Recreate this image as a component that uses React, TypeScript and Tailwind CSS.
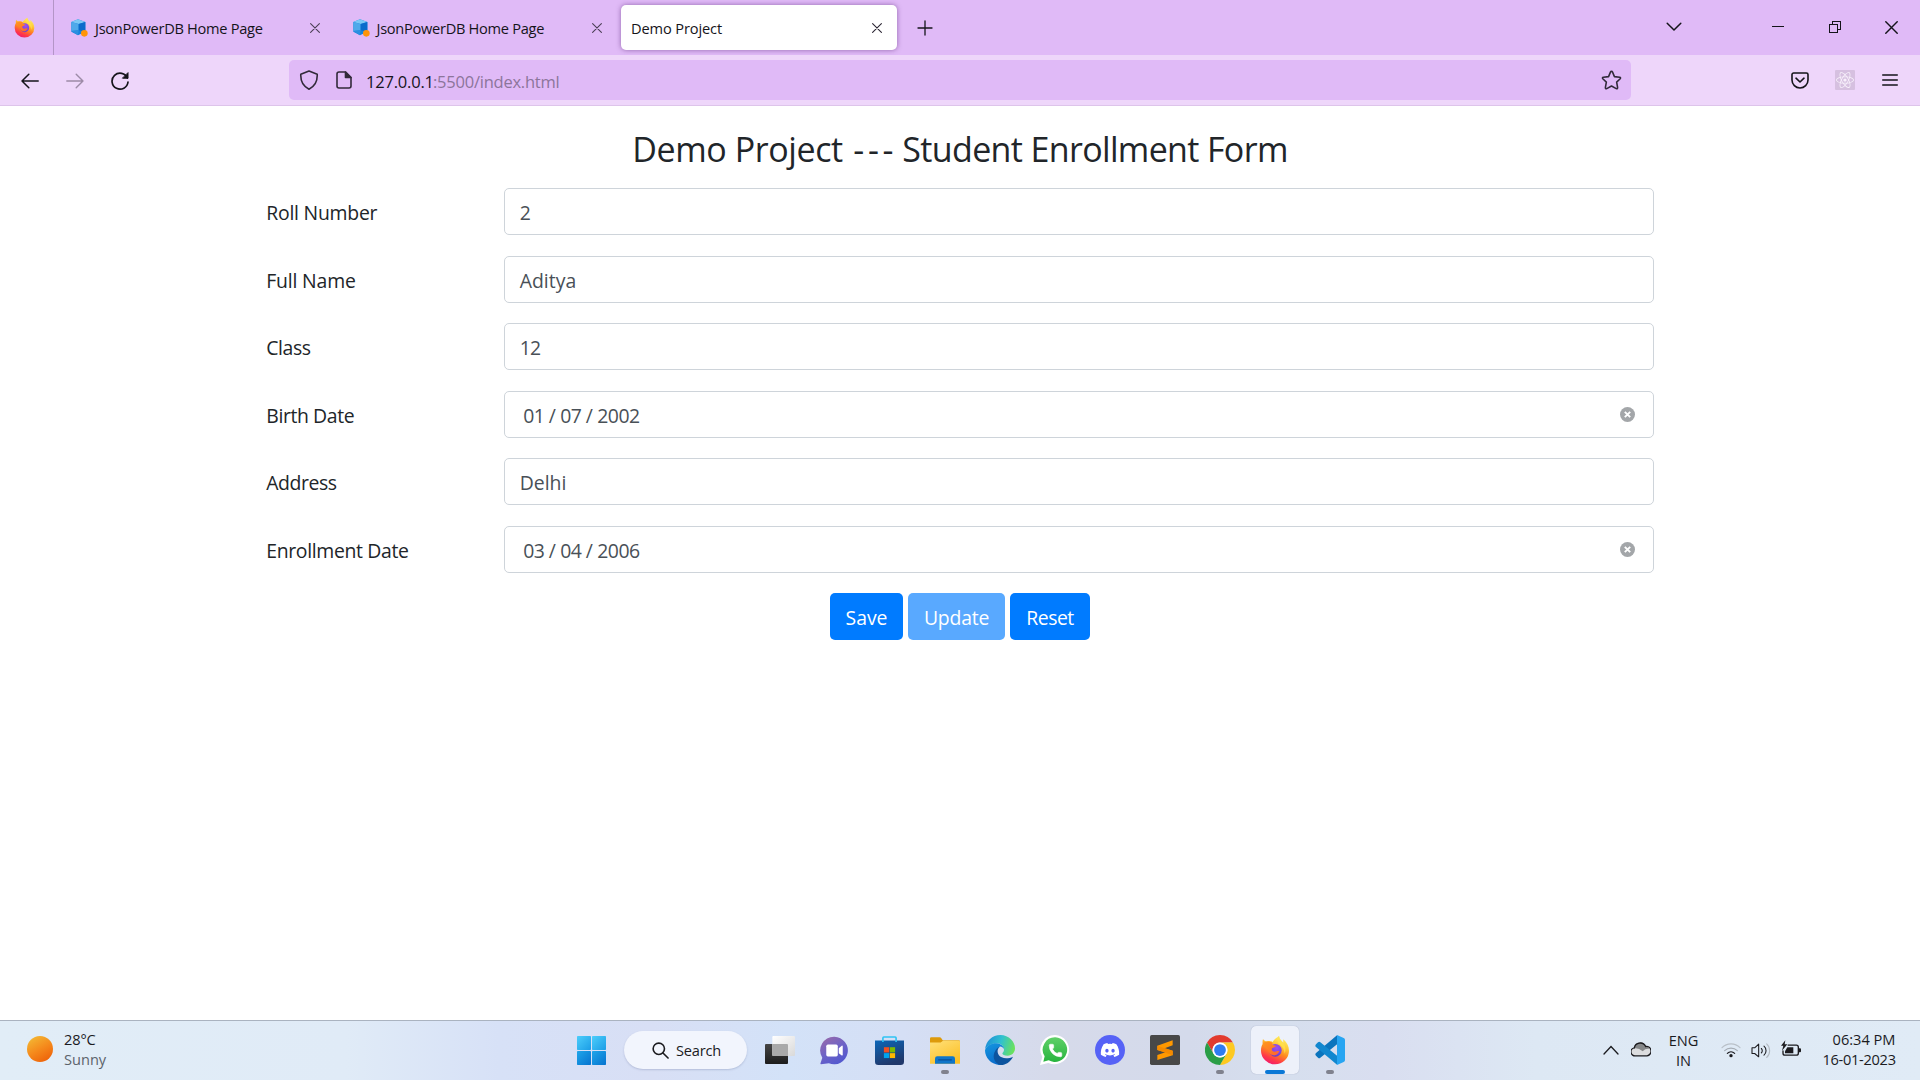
import type { ReactNode } from "react";
import { FaDiscord, FaReact } from "react-icons/fa";
import { Phone } from "lucide-react";

/* ---------- Logos ---------- */

function FirefoxLogo({ id, className }: { id: string; className: string }) {
  return (
    <svg viewBox="0 0 90 90" className={className}>
      <defs>
        <linearGradient id={`${id}-body`} x1="0.75" y1="0" x2="0.3" y2="1">
          <stop offset="0" stopColor="#fff36e" />
          <stop offset="0.3" stopColor="#ffcb3a" />
          <stop offset="0.55" stopColor="#ff8a1f" />
          <stop offset="0.8" stopColor="#ff3b47" />
          <stop offset="1" stopColor="#f0196f" />
        </linearGradient>
        <radialGradient id={`${id}-core`} cx="0.6" cy="0.3" r="0.8">
          <stop offset="0" stopColor="#a04ff0" />
          <stop offset="0.6" stopColor="#7b45e0" />
          <stop offset="1" stopColor="#5a3bb8" />
        </radialGradient>
        <linearGradient id={`${id}-fox`} x1="0" y1="0" x2="0.6" y2="1">
          <stop offset="0" stopColor="#ff9a1c" />
          <stop offset="1" stopColor="#ff6a2c" />
        </linearGradient>
      </defs>
      <path
        d="M57 3C58 12 64 17 70 23C70 18 69 16 70 13C81 22 87 34 87 47A42 41 0 0 1 3 47C3 38 5 31 8 27C7 21 8 16 9 12C12 17 16 19 21 19C28 17 33 18 38 21C43 12 50 8 57 3Z"
        fill={`url(#${id}-body)`}
      />
      <circle cx="46" cy="46" r="19" fill={`url(#${id}-core)`} />
      <path
        d="M8 27C16 17 30 18 38 24C34 28 38 31 48 32C47 37 40 37 36 40C34 46 38 50 44 50C50 50 53 47 58 49C54 57 48 62 40 61C30 60 24 52 26 42C20 40 12 36 8 27Z"
        fill={`url(#${id}-fox)`}
      />
      <path d="M57 3C58 12 64 17 70 23C77 33 79 46 74 56C73 44 68 34 58 28C51 23 50 12 57 3Z" fill="#ffe14d" fillOpacity="0.75" />
    </svg>
  );
}

function JsonDbLogo() {
  return (
    <svg viewBox="0 0 54 54" className="h-[18px] w-[18px] shrink-0">
      <path d="M24 1L46 9V38L24 49L4 38V9Z" fill="#1583dd" />
      <path d="M24 1L46 9L26 15L4 9Z" fill="#7cc8f5" />
      <path d="M4 9L26 15V34L4 36Z" fill="#4fa9ea" />
      <path d="M26 15L46 9V38L26 34Z" fill="#0b6bcb" />
      <path d="M4 36L26 34L24 49Z" fill="#2b8fe0" />
      <circle cx="43" cy="43" r="10" fill="#ff9408" />
    </svg>
  );
}

function WindowsLogo() {
  return (
    <svg viewBox="0 0 87 87" className="h-[29px] w-[29px]">
      <defs>
        <linearGradient id="win" x1="0" y1="0" x2="1" y2="1">
          <stop offset="0" stopColor="#4ccdfb" />
          <stop offset="1" stopColor="#1b9de6" />
        </linearGradient>
        <linearGradient id="win2" x1="0" y1="0" x2="1" y2="1">
          <stop offset="0" stopColor="#1fa6ea" />
          <stop offset="1" stopColor="#0673cf" />
        </linearGradient>
      </defs>
      <rect x="0" y="0" width="42" height="42" rx="2" fill="url(#win)" />
      <rect x="45" y="0" width="42" height="42" rx="2" fill="url(#win)" />
      <rect x="0" y="45" width="42" height="42" rx="2" fill="url(#win2)" />
      <rect x="45" y="45" width="42" height="42" rx="2" fill="url(#win2)" />
    </svg>
  );
}

function TaskViewLogo() {
  return (
    <svg viewBox="0 0 90 84" className="h-[28px] w-[30px]">
      <defs>
        <linearGradient id="tvd" x1="0" y1="0" x2="0" y2="1">
          <stop offset="0" stopColor="#454545" />
          <stop offset="1" stopColor="#1c1c1c" />
        </linearGradient>
        <linearGradient id="tvl" x1="0" y1="0" x2="1" y2="1">
          <stop offset="0" stopColor="#ffffff" />
          <stop offset="1" stopColor="#d9d9d9" />
        </linearGradient>
      </defs>
      <rect x="0" y="24" width="69" height="60" rx="3" fill="url(#tvd)" />
      <rect x="22" y="0" width="68" height="60" rx="3" fill="url(#tvl)" />
      <path d="M22 24H66Q69 24 69 27V60H25Q22 60 22 57Z" fill="#a9a9a9" />
    </svg>
  );
}

function ChatLogo() {
  return (
    <svg viewBox="0 0 88 88" className="mr-px h-[29px] w-[29px]">
      <defs>
        <linearGradient id="chat" x1="0.1" y1="0" x2="0.7" y2="1">
          <stop offset="0" stopColor="#9a6aa8" />
          <stop offset="0.5" stopColor="#6f63c6" />
          <stop offset="1" stopColor="#5158cf" />
        </linearGradient>
      </defs>
      <path d="M44 2A42 42 0 1 1 27 83L3 86Q0 85 2 81L7 66A42 42 0 0 1 44 2Z" fill="url(#chat)" />
      <rect x="19" y="26" width="35" height="36" rx="5" fill="#fff" />
      <path d="M57 37L67 29Q69 29 69 32V57Q69 60 66 59L57 52Z" fill="#fff" />
    </svg>
  );
}

function StoreLogo() {
  return (
    <svg viewBox="0 0 88 88" className="mr-[2px] h-[29px] w-[29px]">
      <defs>
        <linearGradient id="store" x1="0" y1="0" x2="0.4" y2="1">
          <stop offset="0" stopColor="#0c66b8" />
          <stop offset="1" stopColor="#20386b" />
        </linearGradient>
      </defs>
      <path d="M0 14H88V78Q88 88 78 88H10Q0 88 0 78Z" fill="url(#store)" />
      <path d="M24 18V6Q24 3 27 3H61Q64 3 64 6V18" fill="none" stroke="#2fc3f3" strokeWidth="5" />
      <path d="M27 34H43V50H27Z" fill="#f25022" />
      <path d="M45 34H61V50H45Z" fill="#7fba00" />
      <path d="M27 52H43V67H27Z" fill="#00a4ef" />
      <path d="M45 52H61V67H45Z" fill="#ffb900" />
    </svg>
  );
}

function ExplorerLogo() {
  return (
    <svg viewBox="0 0 90 80" className="h-[27px] w-[30px]">
      <defs>
        <linearGradient id="fold" x1="0" y1="0" x2="0.6" y2="1">
          <stop offset="0" stopColor="#ffe07a" />
          <stop offset="1" stopColor="#fcc129" />
        </linearGradient>
      </defs>
      <path d="M0 4Q0 0 4 0H29Q32 0 34 3L38 9H86Q90 9 90 13V30H0Z" fill="#dd9a0b" />
      <path d="M0 16H32L40 10H86Q90 10 90 14V80H0Z" fill="url(#fold)" />
      <path d="M15 80V64Q15 57 22 57H68Q75 57 75 64V80Z" fill="#0f76c9" />
      <path d="M26 68H64" stroke="#0a4f97" strokeWidth="4" strokeLinecap="round" />
    </svg>
  );
}

function EdgeLogo() {
  return (
    <svg viewBox="0 0 90 90" className="h-[30px] w-[30px]">
      <defs>
        <linearGradient id="edt" x1="0" y1="0.4" x2="1" y2="0.6">
          <stop offset="0" stopColor="#1d8fd8" />
          <stop offset="0.5" stopColor="#31c1cf" />
          <stop offset="1" stopColor="#6de356" />
        </linearGradient>
        <linearGradient id="edb" x1="0" y1="0" x2="0.4" y2="1">
          <stop offset="0" stopColor="#1597e0" />
          <stop offset="1" stopColor="#0a6ccb" />
        </linearGradient>
      </defs>
      <path d="M0 44C3 17 22 0 46 0C72 0 90 20 90 40C90 54 80 62 68 62C58 62 52 59 52 55C53 52 57 50 57 44C57 34 47 25 36 25C20 25 5 34 0 44Z" fill="url(#edt)" />
      <path d="M0 46C4 32 22 24 36 25C46 26 56 33 57 42C54 37 49 34 44 35C36 40 30 55 34 66C38 80 46 88 52 90C24 93 0 72 0 46Z" fill="url(#edb)" />
      <path d="M44 35C34 44 36 60 50 67C60 72 74 70 84 65C76 81 62 90 48 90C30 86 22 68 28 53C32 43 38 37 44 35Z" fill="#0c549f" />
    </svg>
  );
}

function WhatsAppLogo() {
  return (
    <div className="relative flex h-[30px] w-[30px] items-center justify-center">
      <svg viewBox="0 0 90 90" className="absolute inset-0 h-[30px] w-[30px]">
        <defs>
          <linearGradient id="wa" x1="0" y1="0" x2="0" y2="1">
            <stop offset="0" stopColor="#5fd068" />
            <stop offset="1" stopColor="#27b43e" />
          </linearGradient>
        </defs>
        <path d="M46 0A44 44 0 1 1 25 84L0 90L7 66A44 44 0 0 1 46 0Z" fill="#fff" />
        <path d="M46 7A37 37 0 1 1 26 76L10 80L14 64A37 37 0 0 1 46 7Z" fill="url(#wa)" />
      </svg>
      <Phone className="relative h-[15px] w-[15px] fill-white text-white" strokeWidth={1} />
    </div>
  );
}

function DiscordLogo() {
  return (
    <div className="flex h-[30px] w-[30px] items-center justify-center rounded-full bg-[#5662f6]">
      <FaDiscord className="h-[20px] w-[20px] text-white" />
    </div>
  );
}

function SublimeLogo() {
  return (
    <svg viewBox="0 0 90 90" className="h-[30px] w-[30px]">
      <rect width="90" height="90" rx="5" fill="#484848" />
      <path d="M22 32L68 16V31L44 40L68 47V61L22 75V60L46 52L22 45Z" fill="#ff9800" />
      <path d="M22 45L22 32L68 47V61Z" fill="#f58a00" />
    </svg>
  );
}

function ChromeLogo() {
  return (
    <svg viewBox="0 0 48 48" className="h-[30px] w-[30px]">
      <path d="M24 12H44.78A24 24 0 0 0 3.21 12L13.6 30A12 12 0 0 1 24 12" fill="#e23b2e" />
      <path d="M34.4 30L24 48A24 24 0 0 0 44.78 12H24A12 12 0 0 1 34.4 30" fill="#fdc921" />
      <path d="M13.6 30L3.21 12A24 24 0 0 0 24 48L34.4 30A12 12 0 0 1 13.6 30" fill="#2a9e47" />
      <circle cx="24" cy="24" r="12" fill="#fff" />
      <circle cx="24" cy="24" r="9.4" fill="#2f7cf0" />
    </svg>
  );
}

function VsCodeLogo() {
  return (
    <svg viewBox="0 0 90 90" className="h-[30px] w-[30px]">
      <path d="M66 1L68 26L16 68Q13 71 9 68L3 62Q-1 58 3 54Z" fill="#0b74bd" />
      <path d="M66 89L68 64L16 22Q13 19 9 22L3 28Q-1 32 3 36Z" fill="#1287cf" />
      <path d="M66 0L86 9Q90 11 90 15V75Q90 79 86 81L66 90Z" fill="#27a5f2" />
    </svg>
  );
}

/* ---------- Browser chrome ---------- */

function CloseGlyph({ className }: { className: string }) {
  return (
    <svg viewBox="0 0 10 10" className={className} fill="none" stroke="currentColor" strokeWidth="1.1" strokeLinecap="round">
      <path d="M0.6 0.6L9.4 9.4M9.4 0.6L0.6 9.4" />
    </svg>
  );
}

function BackgroundTab() {
  return (
    <div className="flex h-[55px] w-[281.5px] shrink-0 items-center pl-4">
      <JsonDbLogo />
      <span className="ml-[7px] mt-[2px] w-[206px] tracking-[-0.019em]">JsonPowerDB Home Page</span>
      <CloseGlyph className="ml-[9px] h-[10px] w-[10px] text-[#4b3f55]" />
    </div>
  );
}

function TabBar() {
  return (
    <div className="flex h-[55px] bg-[#e0baf7] text-[14.6px]">
      <div className="flex w-[54px] items-center border-r border-[#b495c7] pl-[14px]">
        <FirefoxLogo id="ff-small" className="h-[21px] w-[21px]" />
      </div>
      <BackgroundTab />
      <BackgroundTab />
      <div className="ml-[4px] mt-[5px] flex h-[45px] w-[276px] items-center rounded-[5px] bg-white pl-[10px] shadow-[0_0_5px_rgba(70,20,100,0.5)]">
        <span className="mt-[2px] w-[241px] tracking-[-0.008em]">Demo Project</span>
        <CloseGlyph className="h-[10px] w-[10px] text-[#2b2533]" />
      </div>
      <svg viewBox="0 0 16 16" className="ml-[20px] mt-[20px] h-4 w-4" stroke="#15141a" strokeWidth="1.3" strokeLinecap="round">
        <path d="M8 1V15M1 8H15" />
      </svg>
      <div className="ml-auto flex pr-[22px] text-[#15141a]">
        <svg viewBox="0 0 16 10" className="mr-[90px] mt-[22px] h-[10px] w-4" fill="none" stroke="currentColor" strokeWidth="1.5" strokeLinecap="round" strokeLinejoin="round">
          <path d="M1.2 1.2L8 8L14.8 1.2" />
        </svg>
        <div className="mr-[45px] mt-[26px] h-px w-[12px] bg-[#15141a]" />
        <svg viewBox="0 0 12 12" className="mr-[44px] mt-[21px] h-[12px] w-[12px]" fill="none" stroke="currentColor" shapeRendering="crispEdges">
          <path d="M0.5 3.5H8.5V11.5H0.5ZM3.5 3.5V0.5H11.5V8.5H8.5" />
        </svg>
        <CloseGlyph className="mt-[20.5px] h-[13px] w-[13px]" />
      </div>
    </div>
  );
}

function Toolbar() {
  return (
    <div className="flex h-[51px] items-center border-b border-[#ddc4ea] bg-[#eed6fa] text-[#15141a]">
      <svg viewBox="0 0 18 16" className="ml-[21px] mt-px h-4 w-[18px]" fill="none" stroke="currentColor" strokeWidth="1.5" strokeLinecap="round" strokeLinejoin="round">
        <path d="M17.2 8H1M7.8 1.2L1 8L7.8 14.8" />
      </svg>
      <svg viewBox="0 0 18 16" className="ml-[27px] mt-px h-4 w-[18px] text-[#9d8ba7]" fill="none" stroke="currentColor" strokeWidth="1.4" strokeLinecap="round" strokeLinejoin="round">
        <path d="M0.8 8H17M10.2 1.2L17 8L10.2 14.8" />
      </svg>
      <svg viewBox="0 0 20 20" className="ml-[26px] mt-[2px] h-5 w-5" fill="none" stroke="currentColor" strokeWidth="1.7" strokeLinecap="round" strokeLinejoin="round">
        <path d="M17.4 7A8 8 0 1 0 18 11" />
        <path d="M18 2V7.2H12.8Z" fill="currentColor" strokeWidth="1" />
      </svg>
      <div className="ml-[159px] flex h-10 w-[1342px] items-center rounded-[5px] bg-[#e0baf7] pl-[10px] pr-[9px]">
        <svg viewBox="0 0 20 20" className="h-5 w-5" fill="none" stroke="#322a3a" strokeWidth="1.6" strokeLinejoin="round">
          <path d="M10 1L18.2 4.2C18.6 11 15.8 16.4 10 19.2C4.2 16.4 1.4 11 1.8 4.2Z" />
        </svg>
        <svg viewBox="0 0 16 18" className="ml-[17px] h-[18px] w-4" fill="none" stroke="#322a3a" strokeWidth="1.6" strokeLinejoin="round">
          <path d="M9.5 1H3A2 2 0 0 0 1 3V15A2 2 0 0 0 3 17H13A2 2 0 0 0 15 15V6.5Z" />
          <path d="M9.5 1V6.5H15Z" fill="#322a3a" />
        </svg>
        <span className="ml-[14px] mt-[4px] flex whitespace-nowrap text-[16.5px]">
          <span className="w-[67px] tracking-[-0.012em]">127.0.0.1</span>
          <span className="tracking-[-0.014em] text-[#8c759b]">:5500/index.html</span>
        </span>
        <svg viewBox="0 0 20 20" className="ml-auto h-[21px] w-[21px]" fill="none" stroke="#322a3a" strokeWidth="1.5" strokeLinejoin="round">
          <path d="M10 1.3Q10.7 1.3 11 2L12.8 6.3L17.7 6.9Q19.2 7.2 18.3 8.3L14.9 11.5L15.8 16.6Q15.9 18.2 14.5 17.7L10 15.3L5.5 17.7Q4.1 18.2 4.2 16.6L5.1 11.5L1.7 8.3Q0.8 7.2 2.3 6.9L7.2 6.3L9 2Q9.3 1.3 10 1.3Z" />
        </svg>
      </div>
      <svg viewBox="0 0 18 17" className="ml-[160px] h-[17px] w-[18px]" fill="none" stroke="currentColor" strokeWidth="1.6" strokeLinecap="round" strokeLinejoin="round">
        <path d="M2.6 1H15.4A1.6 1.6 0 0 1 17 2.6V8A8 8 0 0 1 1 8V2.6A1.6 1.6 0 0 1 2.6 1Z" />
        <path d="M5 6.2L9 10L13 6.2" />
      </svg>
      <div className="ml-[26px] flex h-5 w-5 items-center justify-center rounded-[1px] bg-[#d6c0e0]">
        <FaReact className="h-[18px] w-[18px] text-[#f8f1fb]" />
      </div>
      <svg viewBox="0 0 16 14" className="ml-[27px] h-[14px] w-4" stroke="currentColor" strokeWidth="1.4" strokeLinecap="round">
        <path d="M0.7 2H15.3M0.7 7H15.3M0.7 12H15.3" />
      </svg>
    </div>
  );
}

/* ---------- Enrollment form ---------- */

function ClearIcon() {
  return (
    <svg viewBox="0 0 15 15" className="-mt-[3px] ml-auto h-[15px] w-[15px]">
      <circle cx="7.5" cy="7.5" r="7.5" fill="#a3a6a9" />
      <path d="M4.8 4.8L10.2 10.2M10.2 4.8L4.8 10.2" stroke="#fff" strokeWidth="1.9" />
    </svg>
  );
}

function DateValue({ parts }: { parts: [string, string, string] }) {
  return (
    <span className="ml-[3.5px] flex tracking-[-0.026em]">
      <span className="w-[25.5px]">{parts[0]}</span>
      <span className="w-[11.5px]">/</span>
      <span className="w-[25.5px]">{parts[1]}</span>
      <span className="w-[11.5px]">/</span>
      <span>{parts[2]}</span>
    </span>
  );
}

function Row({ label, labelClass, clearable, children }: { label: string; labelClass: string; clearable?: boolean; children: ReactNode }) {
  return (
    <div className="mb-5 flex h-[47.5px] items-start">
      <label className={`w-[237.5px] pt-[10px] leading-[30px] text-[#212529] ${labelClass}`}>{label}</label>
      <div className="flex h-[47px] flex-1 items-center rounded-[5px] border border-[#ced4da] bg-white pl-[15px] pr-[18px] pt-[3px] leading-[30px] text-[#495057]">
        {children}
        {clearable && <ClearIcon />}
      </div>
    </div>
  );
}

function EnrollmentForm() {
  return (
    <main className="mx-auto h-[914px] w-[1387.5px] pt-[24px] text-[19.4px]">
      <h2 className="flex h-[58px] justify-center gap-[10.5px] whitespace-nowrap text-[34px] leading-[42px] text-[#212529]">
        <span className="-mt-[2px] tracking-[-0.012em]">Demo Project</span>
        <span className="-mr-[5.5px] -mt-[2px] tracking-[0.11em]">---</span>
        <span className="-mt-[2px] tracking-[-0.019em]">Student Enrollment Form</span>
      </h2>
      <Row label="Roll Number" labelClass="tracking-[-0.012em]">2</Row>
      <Row label="Full Name" labelClass="tracking-[-0.009em]">Aditya</Row>
      <Row label="Class" labelClass="tracking-[-0.021em]"><span className="tracking-[-0.04em]">12</span></Row>
      <Row label="Birth Date" labelClass="tracking-[-0.020em]" clearable><DateValue parts={["01", "07", "2002"]} /></Row>
      <Row label="Address" labelClass="tracking-[-0.022em]">Delhi</Row>
      <Row label="Enrollment Date" labelClass="tracking-[-0.017em]" clearable><DateValue parts={["03", "04", "2006"]} /></Row>
      <div className="flex justify-center gap-[5px] text-white">
        <button className="h-[47px] w-[73px] rounded-[5px] bg-[#007bff] pt-[3px]">Save</button>
        <button className="h-[47px] w-[97px] rounded-[5px] bg-[#59a9ff] pt-[3px] tracking-[-0.011em]">Update</button>
        <button className="h-[47px] w-[80px] rounded-[5px] bg-[#007bff] pt-[3px] tracking-[-0.026em]">Reset</button>
      </div>
    </main>
  );
}

/* ---------- Taskbar ---------- */

function Slot({ children, open, active }: { children: ReactNode; open?: boolean; active?: boolean }) {
  return (
    <div className="flex h-[59px] w-[55px] justify-center">
      <div className={`mt-[5px] flex h-[48px] w-[48px] flex-col items-center ${active ? "rounded-[5px] bg-[#edf1fa] shadow-[0_0_1px_rgba(60,70,110,0.4)]" : ""}`}>
        <div className="flex h-[44px] items-center pt-[4px]">{children}</div>
        {active && <span className="h-[4px] w-[20px] rounded-full bg-[#0a78d6]" />}
        {open && <span className="h-[4px] w-[8px] rounded-full bg-[#80828e]" />}
      </div>
    </div>
  );
}

function Taskbar() {
  return (
    <footer className="flex h-[60px] border-t border-[#aab3c0] bg-[linear-gradient(90deg,#e1edf7_0%,#e0ebf7_18%,#d7e1f7_26%,#d8dff5_34%,#d3e2f8_41%,#d5dff5_47%,#d6daea_55%,#d4daeb_62%,#d6dfee_67%,#d9def0_72%,#dde8f4_80%,#e0ebf6_100%)] text-[14.6px] text-[#1b1b1f]">
      <div className="flex w-[564px] pl-[27px]">
        <div className="mt-[15px] h-[26px] w-[26px] rounded-full bg-[linear-gradient(150deg,#f3bb35_5%,#f58a1c_50%,#ee6209_90%)]" />
        <div className="ml-[11px] mt-[8px] leading-[20px]">
          <p className="tracking-[-0.01em]">28°C</p>
          <p className="text-[#5c636b]">Sunny</p>
        </div>
      </div>
      <Slot><WindowsLogo /></Slot>
      <div className="ml-[5px] mr-[5.5px] mt-[10px] flex h-[38px] w-[123px] items-center rounded-full bg-[#f2f5fd] pl-[28px] shadow-[0_1px_2px_rgba(80,90,140,0.25)]">
        <svg viewBox="0 0 18 18" className="h-[17px] w-[17px]" fill="none" stroke="#1b1b1f" strokeWidth="1.7" strokeLinecap="round">
          <circle cx="7.2" cy="7.2" r="6" />
          <path d="M11.6 11.6L17 17" />
        </svg>
        <span className="ml-[7px] mt-px tracking-[-0.014em]">Search</span>
      </div>
      <Slot><TaskViewLogo /></Slot>
      <Slot><ChatLogo /></Slot>
      <Slot><StoreLogo /></Slot>
      <Slot open><ExplorerLogo /></Slot>
      <Slot><EdgeLogo /></Slot>
      <Slot><WhatsAppLogo /></Slot>
      <Slot><DiscordLogo /></Slot>
      <Slot><SublimeLogo /></Slot>
      <Slot open><ChromeLogo /></Slot>
      <Slot active><FirefoxLogo id="ff-task" className="h-[30px] w-[30px]" /></Slot>
      <Slot open><VsCodeLogo /></Slot>
      <div className="ml-auto flex pr-[24.5px]">
        <svg viewBox="0 0 16 10" className="mt-[24px] h-[10px] w-4" fill="none" stroke="#1b1b1f" strokeWidth="1.3" strokeLinecap="round">
          <path d="M1 9L8 1.5L15 9" />
        </svg>
        <svg viewBox="0 0 60 44" className="ml-[12px] mt-[21px] h-[15px] w-[20px]">
          <path d="M14 41A12 12 0 0 1 10 17A18 18 0 0 1 44 13A14 14 0 0 1 48 41Z" fill="#dcdddf" />
          <path d="M8 19A19 19 0 0 1 44 11Q52 13 55 20Q44 18 35 27Q22 16 8 19Z" fill="#858789" />
          <path d="M14 41A12 12 0 0 1 10 17A18 18 0 0 1 44 13A14 14 0 0 1 48 41Z" fill="none" stroke="#1b1b1f" strokeWidth="4" />
        </svg>
        <div className="ml-[18px] mt-[9px] w-[30px] text-center leading-[20px]">
          <p>ENG</p>
          <p>IN</p>
        </div>
        <svg viewBox="0 0 60 46" className="ml-[22px] mt-[21px] h-[16px] w-[20px]" fill="none" strokeWidth="3.5" strokeLinecap="round">
          <path d="M3 16A38 38 0 0 1 57 16" stroke="#b9c0c8" />
          <path d="M11 25A27 27 0 0 1 49 25" stroke="#a5acb4" />
          <path d="M19 33A16 16 0 0 1 41 33" stroke="#1b1b1f" />
          <circle cx="30" cy="40" r="5" fill="#1b1b1f" />
        </svg>
        <svg viewBox="0 0 60 50" className="ml-[10px] mt-[20.5px] h-[17px] w-[20px]" fill="none" stroke="#1b1b1f" strokeWidth="3.2" strokeLinecap="round" strokeLinejoin="round">
          <path d="M3 17H11L23 6V44L11 34H3Z" />
          <path d="M31 19A9 9 0 0 1 31 32" />
          <path d="M39 12A18 18 0 0 1 39 39" />
          <path d="M47 5A28 28 0 0 1 47 46" stroke="#b4bbc3" />
        </svg>
        <svg viewBox="0 0 60 48" className="ml-[10px] mt-[19px] h-[17px] w-[20px]">
          <path d="M20 14H46A6 6 0 0 1 52 20V38A6 6 0 0 1 46 44H12A6 6 0 0 1 6 38V30" fill="none" stroke="#1b1b1f" strokeWidth="4" />
          <path d="M19 20H37V38H12V32Z" fill="#1b1b1f" />
          <path d="M54 23H57Q60 23 60 26V32Q60 35 57 35H54Z" fill="#1b1b1f" />
          <path d="M13 -1L0 16H7L3 31L19 11H11Z" fill="#1b1b1f" />
        </svg>
        <div className="ml-[22px] mt-[8px] w-[73px] whitespace-nowrap text-right leading-[20px]">
          <p>06:34 PM</p>
          <p className="tracking-[-0.02em]">16-01-2023</p>
        </div>
      </div>
    </footer>
  );
}

export default function App() {
  return (
    <div className="flex h-[1080px] w-[1920px] flex-col overflow-hidden bg-white font-['Open_Sans','Noto_Sans',sans-serif] text-[#15141a]">
      <TabBar />
      <Toolbar />
      <EnrollmentForm />
      <Taskbar />
    </div>
  );
}
